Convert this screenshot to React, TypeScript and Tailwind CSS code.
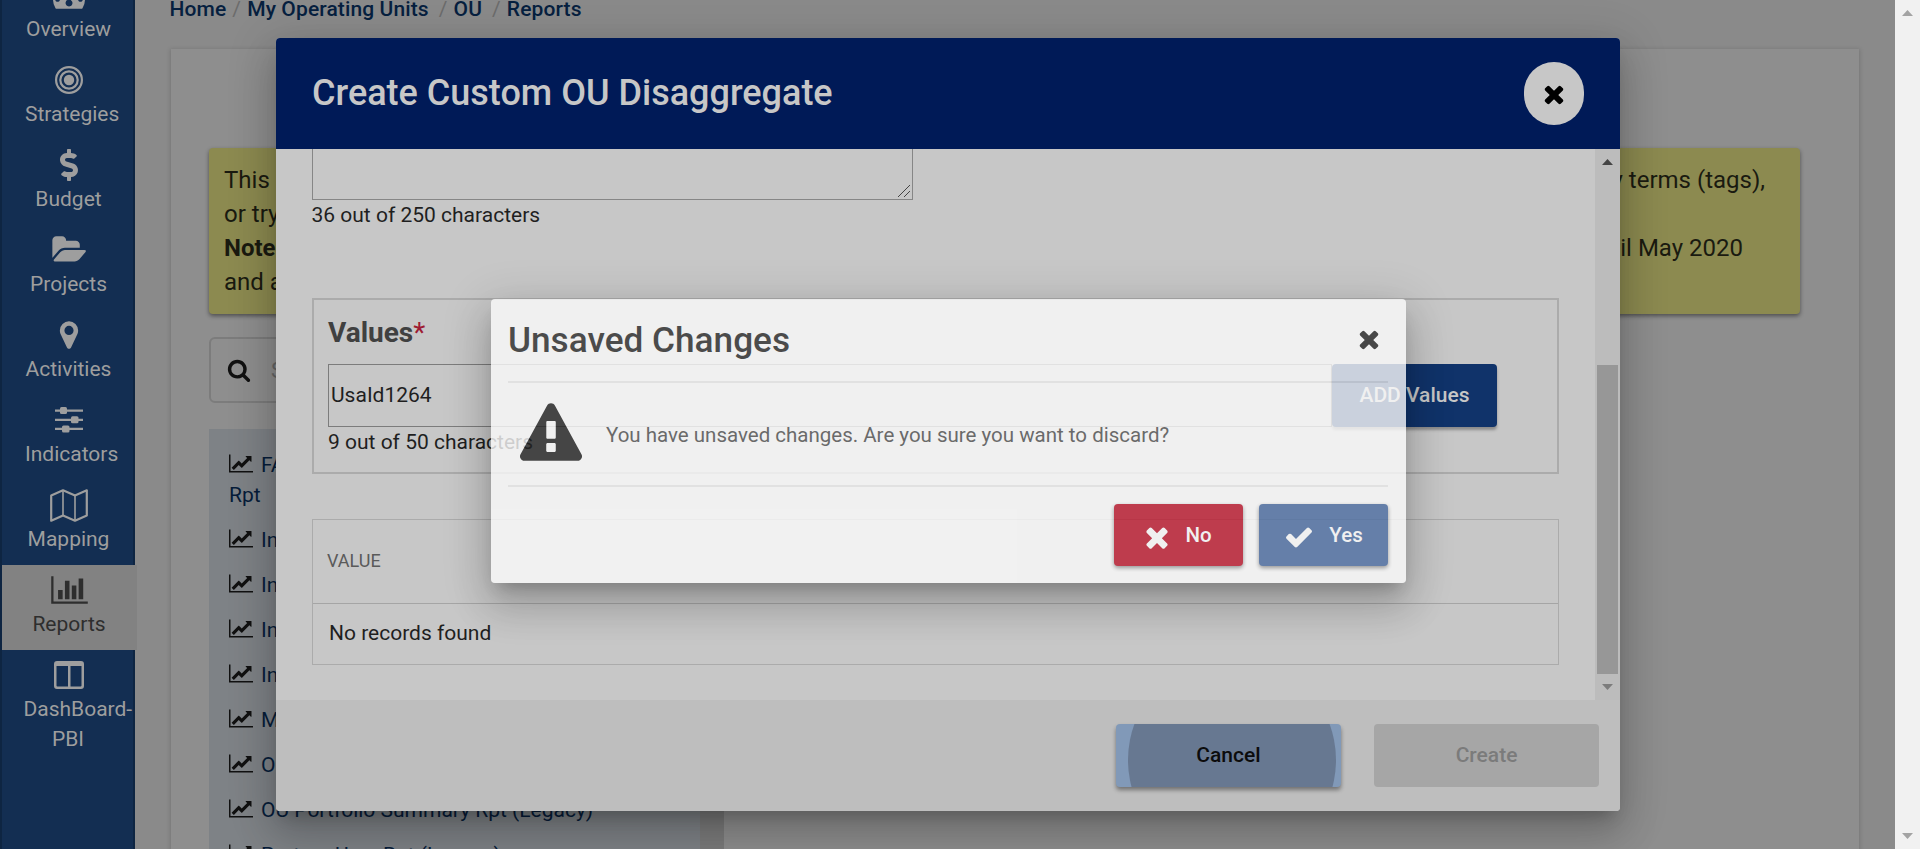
import React from "react";
import { FaDollarSign } from "react-icons/fa";

type IconProps = { d: string; className?: string; box?: string };

const Glyph = ({ d, className = "", box = "0 0 2048 1792" }: IconProps) => (
  <svg viewBox={box} className={`shrink-0 fill-current ${className}`} aria-hidden="true">
    <path d={d} />
  </svg>
);

const SQUARE = "0 0 1792 1792";
const GAUGE =
  "M384 1152q0-53-37.5-90.5t-90.5-37.5-90.5 37.5-37.5 90.5 37.5 90.5 90.5 37.5 90.5-37.5 37.5-90.5zm192-448q0-53-37.5-90.5t-90.5-37.5-90.5 37.5-37.5 90.5 37.5 90.5 90.5 37.5 90.5-37.5 37.5-90.5zm428 481l101-382q6-26-7.5-48.5t-38.5-29.5-48 6.5-30 39.5l-101 382q-60 5-107 43.5t-63 98.5q-20 77 20 146t117 89 146-20 89-117q16-60-6-117t-72-91zm660-33q0-53-37.5-90.5t-90.5-37.5-90.5 37.5-37.5 90.5 37.5 90.5 90.5 37.5 90.5-37.5 37.5-90.5zm-640-640q0-53-37.5-90.5t-90.5-37.5-90.5 37.5-37.5 90.5 37.5 90.5 90.5 37.5 90.5-37.5 37.5-90.5zm448 192q0-53-37.5-90.5t-90.5-37.5-90.5 37.5-37.5 90.5 37.5 90.5 90.5 37.5 90.5-37.5 37.5-90.5zm320 448q0 261-141 483-19 29-54 29h-1402q-35 0-54-29-141-221-141-483 0-182 71-348t191-286 286-191 348-71 348 71 286 191 191 286 71 348z";
const TIMES =
  "M1490 1322q0 40-28 68l-136 136q-28 28-68 28t-68-28l-294-294-294 294q-28 28-68 28t-68-28l-136-136q-28-28-28-68t28-68l294-294-294-294q-28-28-28-68t28-68l136-136q28-28 68-28t68 28l294 294 294-294q28-28 68-28t68 28l136 136q28 28 28 68t-28 68l-294 294 294 294q28 28 28 68z";
const CHECK =
  "M1671 566q0 40-28 68l-724 724-136 136q-28 28-68 28t-68-28l-136-136-362-362q-28-28-28-68t28-68l136-136q28-28 68-28t68 28l294 295 656-657q28-28 68-28t68 28l136 136q28 28 28 68z";
const SEARCH =
  "M1216 832q0-185-131.5-316.5t-316.5-131.5-316.5 131.5-131.5 316.5 131.5 316.5 316.5 131.5 316.5-131.5 131.5-316.5zm512 832q0 52-38 90t-90 38q-54 0-90-38l-343-342q-179 124-399 124-143 0-273.5-55.5t-225-150-150-225-55.5-273.5 55.5-273.5 150-225 225-150 273.5-55.5 273.5 55.5 225 150 150 225 55.5 273.5q0 220-124 399l343 343q37 37 37 90z";
const BARS =
  "M640 896v512h-256v-512h256zm384-512v1024h-256v-1024h256zm1024 1152v128h-2048v-1536h128v1408h1920zm-640-896v768h-256v-768h256zm384-384v1152h-256v-1152h256z";
const LINE =
  "M2048 1536v128h-2048v-1536h128v1408h1920zm-128-1248v435q0 21-19.5 29.5t-35.5-7.5l-121-121-633 633q-10 10-23 10t-23-10l-233-233-416 416-192-192 585-585q10-10 23-10t23 10l233 233 464-464-121-121q-16-16-7.5-35.5t29.5-19.5h435q14 0 23 9t9 23z";
const MARKER =
  "M1152 640q0-106-75-181t-181-75-181 75-75 181 75 181 181 75 181-75 75-181zm256 0q0 109-33 179l-364 774q-16 33-47.5 52t-67.5 19-67.5-19-46.5-52l-365-774q-33-70-33-179 0-212 150-362t362-150 362 150 150 362z";
const FOLDER =
  "M1943 952q0 31-31 66l-336 396q-43 51-120.5 86.5t-143.5 35.5h-1088q-34 0-60.5-13t-26.5-43q0-31 31-66l336-396q43-51 120.5-86.5t143.5-35.5h1088q34 0 60.5 13t26.5 43zm-343-344v160h-832q-94 0-197 47.5t-164 119.5l-337 396-5 6q0-4-.5-12.5t-.5-12.5v-960q0-92 66-158t158-66h320q92 0 158 66t66 158v32h544q92 0 158 66t66 158z";
const WARNING =
  "M1034 1375v-190q0-14-9.5-23.5t-22.5-9.5h-212q-13 0-22.5 9.5t-9.5 23.5v190q0 14 9.5 23.5t22.5 9.5h212q13 0 22.5-9.5t9.5-23.5zm0-374v-459q0-12-10-19-13-11-24-11h-206q-11 0-24 11-10 7-10 21v457q0 10 10 16.5t24 6.5h205q14 0 23.5-6.5t10.5-16.5zm-26-934l768 1408q35 63-2 126-17 29-46.5 46t-63.5 17h-1536q-34 0-63.5-17t-46.5-46q-37-63-2-126l768-1408q17-31 47-49t65-18 65 18 47 49z";

const Target = () => (
  <svg viewBox="0 0 28 28" className="size-7 fill-none stroke-current" aria-hidden="true">
    <circle cx="14" cy="14" r="12.900" strokeWidth="2.200" />
    <circle cx="14" cy="14" r="8.700" strokeWidth="2.200" />
    <circle cx="14" cy="14" r="5.200" className="fill-current" stroke="none" />
  </svg>
);

const Sliders = () => (
  <svg viewBox="0 0 28 26" className="h-[26px] w-7 fill-current" aria-hidden="true">
    <path d="M0 2.500h28v2.200H0zM0 11.700h28v2.200H0zM0 20.800h28v2.200H0z" />
    <rect x="5" y="0" width="7" height="7" rx="1.500" />
    <rect x="16" y="9.300" width="7.500" height="7" rx="1.500" />
    <rect x="7" y="18.500" width="7.500" height="7" rx="1.500" />
  </svg>
);

const MapIcon = () => (
  <svg viewBox="0 0 38 33" className="h-[33px] w-[38px] fill-none stroke-current" aria-hidden="true">
    <path d="M1.200 6.500 13 1.300 25 6.500 36.800 1.300V26.500L25 31.700 13 26.500 1.200 31.700z" strokeWidth="2.200" strokeLinejoin="round" />
    <path d="M13 1.300V26.500M25 6.500V31.700" strokeWidth="1.600" />
  </svg>
);

const Columns = () => (
  <svg viewBox="0 0 30 28" className="h-7 w-[30px] fill-current" aria-hidden="true">
    <path
      fillRule="evenodd"
      d="M3 0h24q3 0 3 3v22q0 3-3 3H3q-3 0-3-3V3Q0 0 3 0zM2.500 5v19.500q0 1 1 1H14V5zM16.500 5v20.500h10q1 0 1-1V5z"
    />
  </svg>
);

const NAV: { label: string; icon: React.ReactNode; active?: boolean; tall?: boolean }[] = [
  { label: "Overview", icon: <Glyph d={GAUGE} box={SQUARE} className="size-8" /> },
  { label: "Strategies", icon: <Target /> },
  { label: "Budget", icon: <FaDollarSign className="size-8" /> },
  { label: "Projects", icon: <Glyph d={FOLDER} className="h-8 w-[37px]" /> },
  { label: "Activities", icon: <Glyph d={MARKER} box={SQUARE} className="size-8" /> },
  { label: "Indicators", icon: <Sliders /> },
  { label: "Mapping", icon: <MapIcon /> },
  { label: "Reports", icon: <Glyph d={BARS} className="h-8 w-[37px]" />, active: true },
  { label: "DashBoard-PBI", icon: <Columns />, tall: true },
];

const Sidebar = () => (
  <nav className="relative z-10 flex h-full w-[135px] shrink-0 flex-col border-r-2 border-l-2 border-[#0e2542] bg-[#132e52]">
    <ul className="-mt-[30px] flex flex-col">
      {NAV.map((item) => (
        <li
          key={item.label}
          className={
            item.active
              ? "flex h-[85px] w-[135px] flex-col items-center bg-[#828282] text-[#2e2e2e]"
              : "flex h-[85px] w-[131px] flex-col items-center pl-[3px] text-[#9e9e9e]"
          }
        >
          <span className="flex h-[50px] shrink-0 items-center justify-center">{item.icon}</span>
          <span
            className={
              item.tall
                ? "-mt-1.5 mr-0.5 w-[89px] shrink-0 text-center text-[21px] leading-[30px]"
                : "-mt-0.5 mr-px w-[87px] shrink-0 text-center text-[21px] leading-[22px]"
            }
          >
            {item.label}
          </span>
        </li>
      ))}
    </ul>
  </nav>
);

const REPORTS = [
  "Indicator Data Rpt",
  "Indicator List Rpt",
  "Indicator Result Rpt",
  "Indicator Summary Rpt",
  "Mechanism Rpt",
  "OU Budget Rpt",
  "OU Portfolio Summary Rpt (Legacy)",
  "Partner User Rpt (Legacy)",
];

const ReportsPage = () => (
  <main className="min-w-0 flex-1 overflow-hidden bg-[#8a8a8a] pl-9">
    <nav className="-mt-[3px] flex h-[26px] items-center gap-1.5 text-[21px] font-medium tracking-[0.12px] text-[#06203f]">
      <span className="-ml-[1.5px]">Home</span>
      <span className="font-normal text-[#6c6c6c]">/</span>
      <span>My Operating Units</span>
      <span className="ml-1 font-normal text-[#6c6c6c]">/</span>
      <span>OU</span>
      <span className="ml-1 font-normal text-[#6c6c6c]">/</span>
      <span>Reports</span>
    </nav>
    <section className="mt-[26px] h-[900px] w-[1688px] bg-[#8e8e8e] px-[38px] pt-[99px] shadow-[0_1px_4px_1px_rgba(0,0,0,0.14)]">
      <div className="h-[166px] w-[1591px] rounded bg-[#8c8a50] px-[15px] py-[15px] text-[24px] leading-[34px] text-[#1a1a10] shadow-[0_2px_4px_rgba(0,0,0,0.45)]">
        <div className="flex justify-between pr-[20px]">
          <span>This page</span>
          <span>key terms (tags),</span>
        </div>
        <div>or try again</div>
        <div className="flex justify-between pr-[42px]">
          <b className="font-bold">Note:</b>
          <span>until May 2020</span>
        </div>
        <div>and after</div>
      </div>
      <div className="mt-[23px] flex h-[66px] w-[520px] items-center rounded-md border-2 border-[#7c7c7c] pl-4 text-[22px] text-[#666]">
        <Glyph d={SEARCH} box={SQUARE} className="size-6 text-[#111]" />
        <span className="ml-5">Search</span>
      </div>
      <div className="mt-[26px] flex h-[500px] w-[515px] bg-[#7b7b7b]">
        <ul className="w-[491px] bg-[#7e8286] px-5 pt-[21px] text-[21px] leading-[30px] text-[#071d3a]">
          <li className="mb-[15px]">
            <Glyph d={LINE} className="mr-2 inline-block h-[21px] w-6 align-[-2px] text-[#111]" />
            FACTS
            <br />
            Rpt
          </li>
          {REPORTS.map((name) => (
            <li key={name} className="mb-[15px] whitespace-nowrap">
              <Glyph d={LINE} className="mr-2 inline-block h-[21px] w-6 align-[-2px] text-[#111]" />
              {name}
            </li>
          ))}
        </ul>
      </div>
    </section>
  </main>
);

const PageScrollbar = () => (
  <div className="flex h-full w-[25px] shrink-0 flex-col items-center justify-between bg-[#f1f1f1] py-[10px] text-[#a3a3a3]">
    <svg viewBox="0 0 11 6" className="h-1.5 w-[11px] fill-current"><path d="M5.500 0 11 6H0z" /></svg>
    <svg viewBox="0 0 11 6" className="h-1.5 w-[11px] fill-current"><path d="M0 0H11L5.500 6z" /></svg>
  </div>
);

const DisaggregateDialog = () => (
  <div className="absolute top-[38px] left-[276px] flex h-[773px] w-[1344px] flex-col overflow-hidden rounded bg-[#c7c7c7] text-[#1f1f1f]">
    <header className="flex h-[111px] shrink-0 items-center justify-between bg-[#001a57] pr-9 pl-9">
      <h2 className="-mt-0.5 text-[36px] font-medium text-[#c7c7c7]">Create Custom OU Disaggregate</h2>
      <button className="flex h-[63px] w-[60px] items-center justify-center rounded-full bg-[#c7c7c7] text-black">
        <Glyph d={TIMES} box={SQUARE} className="mt-px size-7" />
      </button>
    </header>
    <div className="flex h-[551px] shrink-0 overflow-hidden">
      <div className="w-[1319px] pl-9">
        <div className="flex h-[51px] w-[601px] items-end justify-end border border-t-0 border-[#868686] p-0.5">
          <svg viewBox="0 0 12 12" className="size-3 fill-none stroke-[#444]"><path d="M0 12 12 0M6 12 12 6" /></svg>
        </div>
        <p className="-ml-[0.5px] h-[30px] text-[21px] leading-[30px]">36 out of 250 characters</p>
        <fieldset className="mt-[68px] h-[176px] w-[1247px] border-2 border-[#ababab] px-[14px] pt-[15px]">
          <h3 className="text-[28px] leading-[36px] font-bold text-[#404040]">
            Values<span className="font-normal text-[#9e1b32]">*</span>
          </h3>
          <div className="mt-[13px] flex h-[63px]">
            <div className="flex w-[1004px] items-center border border-[#7c7c7c] pt-px pl-[2px] text-[21px]">UsaId1264</div>
            <button className="w-[165px] rounded bg-[#10336a] pt-px text-[21px] font-medium text-[#c7c7c7] shadow-[0_3px_3px_rgba(0,0,0,0.3)]">
              ADD Values
            </button>
          </div>
          <p className="text-[21px] leading-[30px]">9 out of 50 characters</p>
        </fieldset>
        <div className="mt-[45px] h-[146px] w-[1247px] border border-[#ababab]">
          <div className="flex h-[84px] items-center border-b border-[#a5a5a5] pb-[3px] pl-[14px] text-[18px] text-[#5a5a5a]">VALUE</div>
          <div className="flex h-[60px] items-center pl-4 text-[21px]">No records found</div>
        </div>
      </div>
      <div className="flex w-[25px] flex-col items-center bg-[#bcbcbc]">
        <svg viewBox="0 0 11 6" className="mt-[10px] h-1.5 w-[11px] fill-[#444]"><path d="M5.500 0 11 6H0z" /></svg>
        <div className="mt-[200px] h-[309px] w-[21px] bg-[#979797]" />
        <svg viewBox="0 0 11 6" className="mt-[10px] h-1.5 w-[11px] fill-[#7c7c7c]"><path d="M0 0H11L5.500 6z" /></svg>
      </div>
    </div>
    <footer className="flex flex-1 items-start justify-end gap-[33px] bg-[#bebebe] pt-6 pr-[21px]">
      <button className="relative h-[63px] w-[225px] rounded bg-[#8199b8] pt-px text-[21px] font-medium text-[#0c0c0c] shadow-[0_3px_4px_rgba(0,0,0,0.4)]">
        <span className="absolute inset-0 overflow-hidden rounded">
          <span className="absolute top-[-68px] left-[12px] size-[208px] rounded-full bg-[#677891]" />
        </span>
        <span className="relative">Cancel</span>
      </button>
      <button className="h-[63px] w-[225px] rounded bg-[#a6a6a6] pt-px text-[21px] font-medium text-[#7b7b7b]">Create</button>
    </footer>
  </div>
);

const ConfirmDialog = () => (
  <div className="absolute top-[299px] left-[491px] h-[284px] w-[915px] rounded bg-[#fcfcfc] pr-[18px] pl-[17px] opacity-[0.79]">
    <header className="flex h-[84px] items-center justify-between border-b-2 border-black/8 pr-[5px]">
      <h2 className="text-[35.2px] font-medium text-[#2b2b2b]">Unsaved Changes</h2>
      <Glyph d={TIMES} box={SQUARE} className="-mt-0.5 size-[28px] text-[#262626]" />
    </header>
    <div className="flex h-[104px] items-center border-b-2 border-black/8 pl-3 text-[20.5px] text-[#525252]">
      <Glyph d={WARNING} box="0 0 1792 1664" className="-mt-1 h-[58px] w-[62px] text-[#232323]" />
      <span className="mt-0.5 ml-6">You have unsaved changes. Are you sure you want to discard?</span>
    </div>
    <footer className="flex justify-end gap-4 pt-[17px] text-[20.5px] font-medium text-[#fcfcfc]">
      <button className="flex h-[62px] w-[129px] items-center justify-center rounded-sm bg-[#bc172d] shadow-[0_2px_4px_rgba(0,0,0,0.45)]">
        <Glyph d={TIMES} box={SQUARE} className="mt-1 mr-3 -ml-1 size-8" />
        No
      </button>
      <button className="flex h-[62px] w-[129px] items-center justify-center rounded-sm bg-[#4c6da2] shadow-[0_2px_4px_rgba(0,0,0,0.45)]">
        <Glyph d={CHECK} box={SQUARE} className="mt-1 mr-[15px] size-[30px]" />
        Yes
      </button>
    </footer>
  </div>
);

export default function App() {
  return (
    <div className="relative flex h-[849px] w-[1920px] overflow-hidden font-[Roboto,sans-serif]">
      <Sidebar />
      <ReportsPage />
      <PageScrollbar />
      <div className="absolute inset-0 z-20">
        <div className="absolute top-[38px] left-[276px] h-[773px] w-[1344px] rounded shadow-[0_11px_15px_-7px_rgba(0,0,0,0.2),0_24px_38px_3px_rgba(0,0,0,0.14),0_9px_46px_8px_rgba(0,0,0,0.12)]" />
        <DisaggregateDialog />
        <div className="absolute top-[299px] left-[491px] h-[284px] w-[915px] rounded shadow-[0_11px_15px_-7px_rgba(0,0,0,0.2),0_24px_38px_3px_rgba(0,0,0,0.14),0_9px_46px_8px_rgba(0,0,0,0.12)]" />
        <ConfirmDialog />
      </div>
    </div>
  );
}
